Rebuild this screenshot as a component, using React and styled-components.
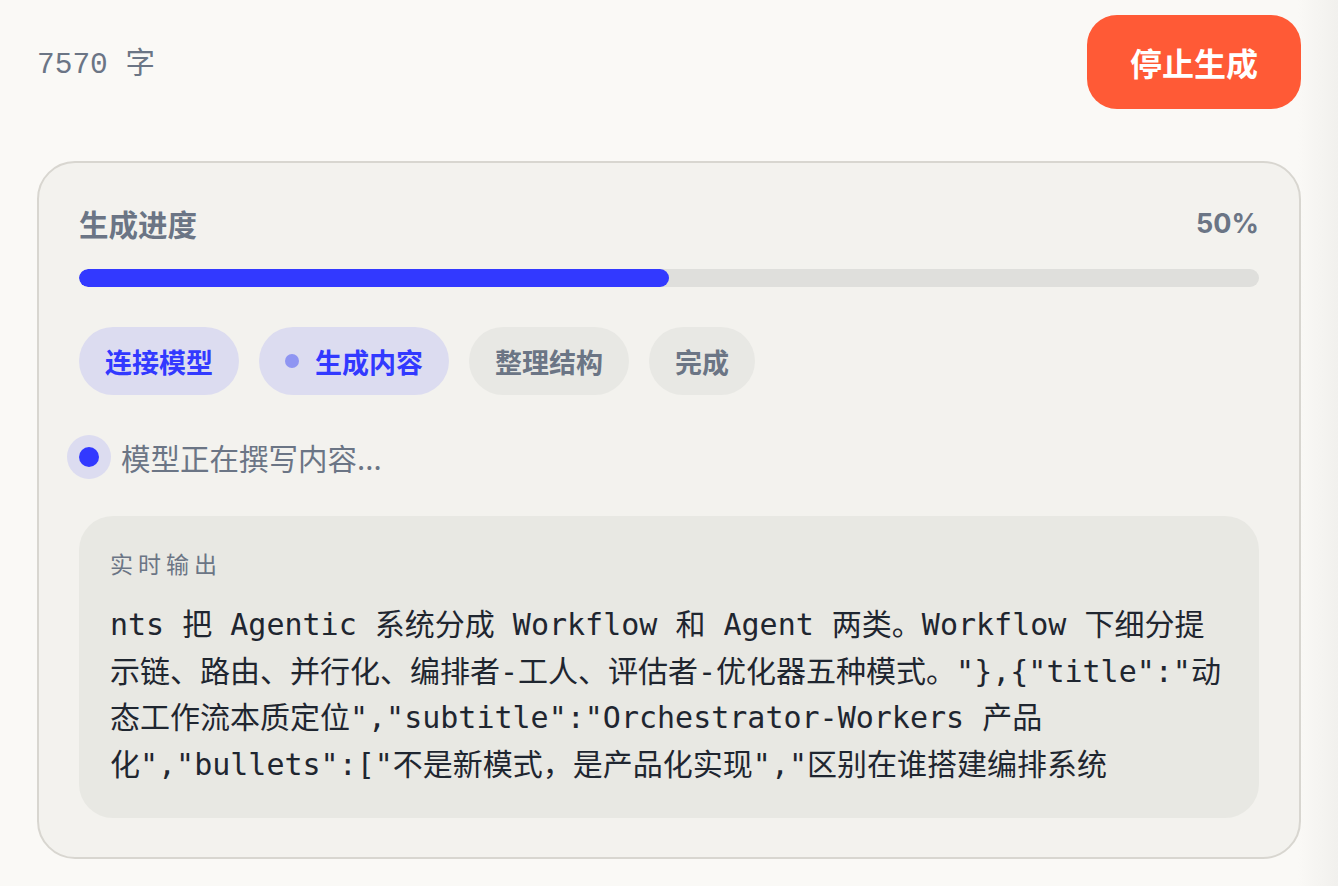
import React from "react";
import styled, { createGlobalStyle } from "styled-components";

const GlobalStyle = createGlobalStyle`
  html, body {
    margin: 0;
    padding: 0;
    background: #faf9f6;
  }
  body {
    font-family: "Inter", "Noto Sans CJK SC", sans-serif;
  }
`;

const Page = styled.div`
  min-height: 886px;
  box-sizing: border-box;
  padding: 15px 37px 27px 37px;
  background: linear-gradient(90deg, #faf9f6 0%, #faf9f6 97%, #f1f0ed 100%);
`;

const Header = styled.div`
  display: flex;
  align-items: center;
  justify-content: space-between;
  height: 94px;
  margin-bottom: 52px;
`;

const WordCount = styled.span`
  font-family: "Liberation Mono", "Noto Sans CJK SC", monospace;
  font-size: 29.5px;
  color: #6b7585;
  margin-top: -3px;
`;

const StopButton = styled.button`
  width: 214px;
  height: 94px;
  border: none;
  border-radius: 30px;
  background: #ff5a36;
  color: #ffffff;
  font-family: "Noto Sans CJK SC", sans-serif;
  font-size: 32px;
  font-weight: 700;
  cursor: pointer;
`;

const Card = styled.div`
  border: 2px solid #d8d6d0;
  border-radius: 38px;
  background: #f3f2ee;
  padding: 40px 40px 39px 40px;
`;

const ProgressHead = styled.div`
  display: flex;
  justify-content: space-between;
  align-items: center;
  height: 40px;
  font-size: 29.5px;
  font-weight: 700;
  color: #6b7585;
`;

const Percent = styled.span`
  font-family: "Inter", sans-serif;
  font-size: 27px;
`;

const Track = styled.div`
  height: 18px;
  border-radius: 9px;
  background: #dfdfdc;
  margin-top: 26px;
  overflow: hidden;
`;

const Fill = styled.div`
  height: 100%;
  border-radius: 9px;
  background: #3239ff;
`;

const Steps = styled.div`
  display: flex;
  gap: 20px;
  margin-top: 40px;
`;

const Step = styled.div`
  display: flex;
  align-items: center;
  gap: 16px;
  height: 68px;
  padding: 0 26px;
  border-radius: 34px;
  background: ${(p) => (p.$active ? "#dcdcf0" : "#e8e8e4")};
  color: ${(p) => (p.$active ? "#3239ff" : "#6b7585")};
  font-family: "Noto Sans CJK SC", sans-serif;
  font-size: 27px;
  font-weight: 700;
`;

const StepDot = styled.span`
  width: 14px;
  height: 14px;
  border-radius: 50%;
  background: #8f95f2;
`;

const Status = styled.div`
  display: flex;
  align-items: center;
  gap: 22px;
  margin-top: 41px;
  font-family: "Noto Sans CJK SC", sans-serif;
  font-size: 29.5px;
  color: #6b7585;
`;

const PulseDot = styled.span`
  flex: none;
  width: 20px;
  height: 20px;
  border-radius: 50%;
  background: #3239ff;
  box-shadow: 0 0 0 12px #dcdcf0;
`;

const Output = styled.div`
  margin-top: 38px;
  border-radius: 34px;
  background: #e8e8e3;
  padding: 34px 31px 30px 31px;
`;

const OutputLabel = styled.div`
  font-family: "Noto Sans CJK SC", sans-serif;
  font-size: 23px;
  letter-spacing: 5px;
  color: #6b7585;
  line-height: 26px;
`;

const OutputText = styled.div`
  margin-top: 26px;
  max-width: 1116px;
  font-family: "DejaVu Sans Mono", "Noto Sans CJK SC", monospace;
  font-size: 30px;
  line-height: 46.5px;
  color: #1f2630;
`;

const steps = [
  { label: "连接模型", active: true },
  { label: "生成内容", active: true, dot: true },
  { label: "整理结构" },
  { label: "完成" },
];

const streamed =
  'nts 把 Agentic 系统分成 Workflow 和 Agent 两类。Workflow 下细分提示链、路由、并行化、编排者-工人、评估者-优化器五种模式。"},{"title":"动态工作流本质定位","subtitle":"Orchestrator-Workers 产品化","bullets":["不是新模式，是产品化实现","区别在谁搭建编排系统';

export default function App() {
  const progress = 50;

  return (
    <>
      <GlobalStyle />
      <Page>
        <Header>
          <WordCount>7570 字</WordCount>
          <StopButton>停止生成</StopButton>
        </Header>

        <Card>
          <ProgressHead>
            <span>生成进度</span>
            <Percent>{progress}%</Percent>
          </ProgressHead>
          <Track>
            <Fill style={{ width: `${progress}%` }} />
          </Track>

          <Steps>
            {steps.map((s) => (
              <Step key={s.label} $active={s.active}>
                {s.dot && <StepDot />}
                {s.label}
              </Step>
            ))}
          </Steps>

          <Status>
            <PulseDot />
            模型正在撰写内容...
          </Status>

          <Output>
            <OutputLabel>实时输出</OutputLabel>
            <OutputText>{streamed}</OutputText>
          </Output>
        </Card>
      </Page>
    </>
  );
}
